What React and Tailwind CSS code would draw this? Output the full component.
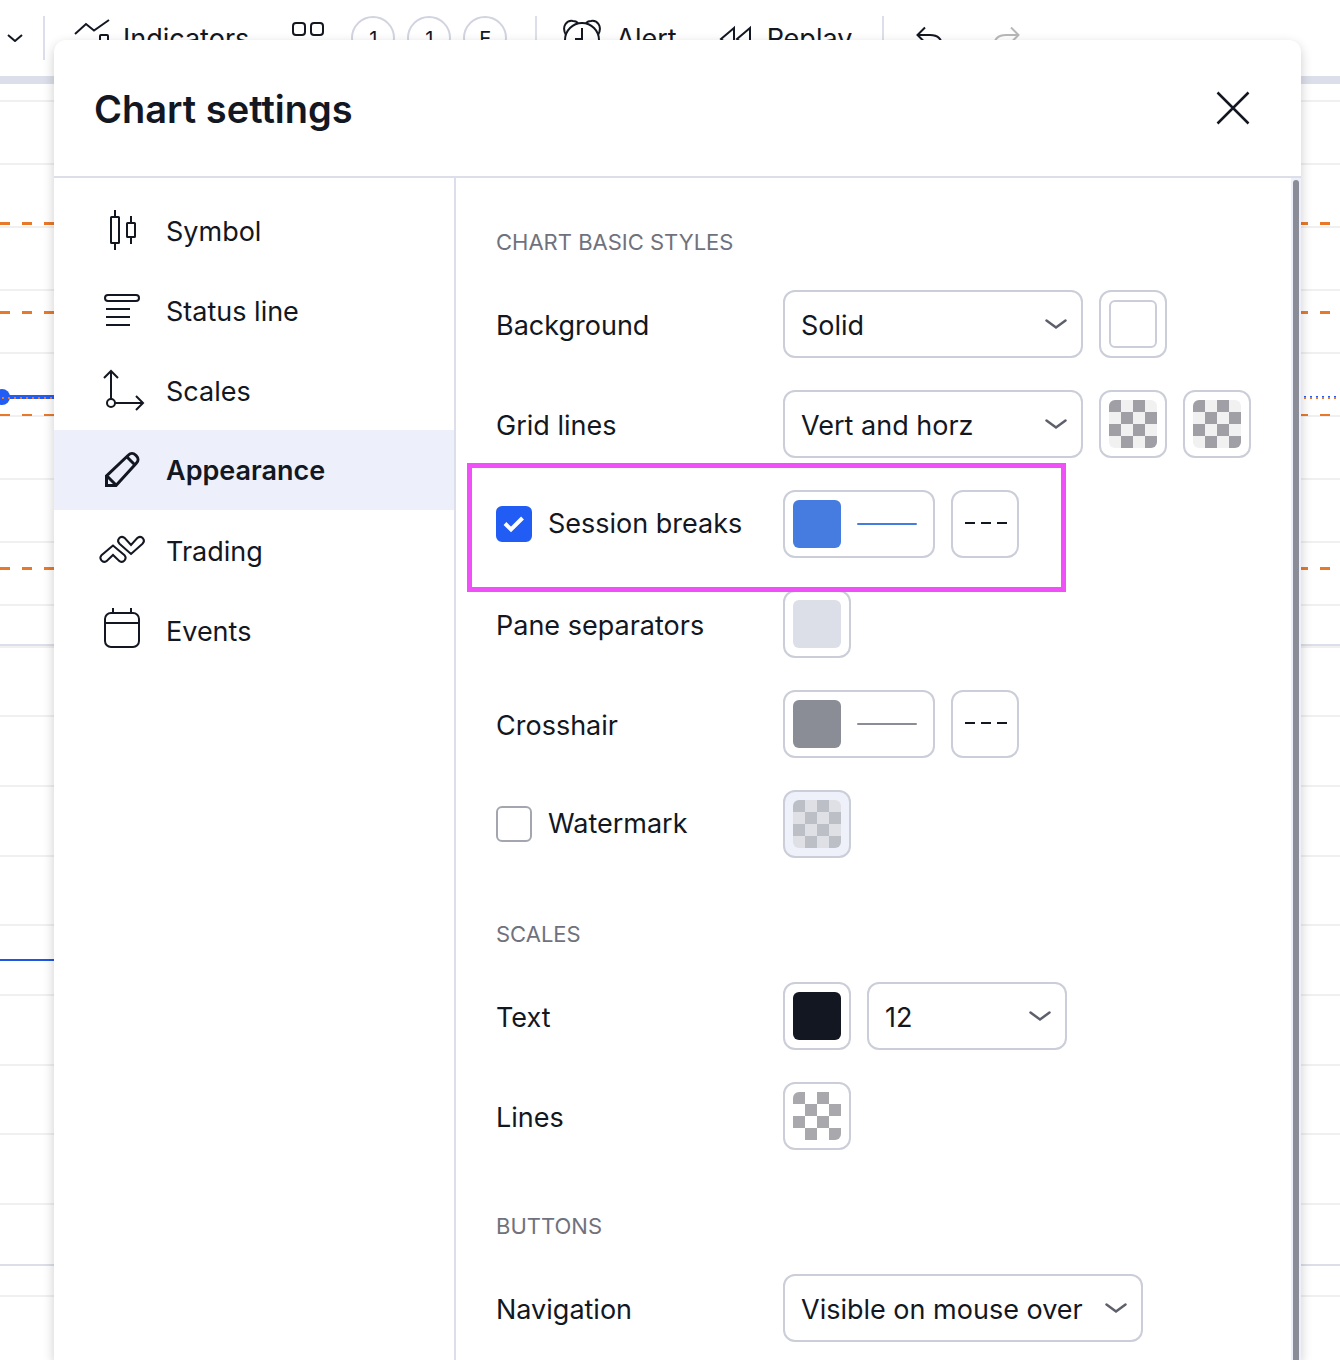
import React, { useState } from "react";

const GRID_LINES = [101, 164, 227, 290, 353, 416, 479, 542, 605, 647, 716, 786, 856, 925, 995, 1065, 1134, 1204, 1296];
const LEVELS = [
  { y: 223.5, width: 3 },
  { y: 312.5, width: 3 },
  { y: 415, width: 2 },
  { y: 568.5, width: 3 },
];

function Toolbar() {
  return (
    <header className="flex h-[84px] items-center overflow-hidden whitespace-nowrap border-b-8 border-[#dcdfe9] pl-[7px] text-[27px]">
      <button aria-label="More" className="w-4 shrink-0">
        <svg viewBox="0 0 16 8" className="w-4 h-2" fill="none" stroke="currentColor" strokeWidth="2"><path d="M1 1l7 6 7-6" /></svg>
      </button>
      <span className="ml-5 h-11 w-0.5 shrink-0 bg-[#dcdfe9]" />
      <button className="ml-7 flex shrink-0 items-center gap-2">
        <svg viewBox="0 0 42 44" className="h-11 w-[42px]" fill="none" stroke="currentColor" strokeWidth="2">
          <path d="M2 18L13 8l8 6.500L36 4" />
          <rect x="27" y="19" width="8" height="20" rx="1" />
        </svg>
        <span className="pt-0.5">Indicators</span>
      </button>
      <button aria-label="Layouts" className="ml-[42px] shrink-0">
        <svg viewBox="0 0 34 34" className="size-[34px]" fill="none" stroke="currentColor" strokeWidth="2">
          <rect x="2" y="2" width="12" height="12" rx="3" /><rect x="20" y="2" width="12" height="12" rx="3" />
          <rect x="2" y="20" width="12" height="12" rx="3" /><rect x="20" y="20" width="12" height="12" rx="3" />
        </svg>
      </button>
      <div className="ml-[26px] flex shrink-0 gap-3 text-xl">
        {["1", "1", "E"].map((t, i) => (
          <button key={i} className="size-11 rounded-full border-2 border-[#d1d4e0] pt-0.5">{t}</button>
        ))}
      </div>
      <span className="ml-7 h-11 w-0.5 shrink-0 bg-[#dcdfe9]" />
      <button className="ml-[25px] flex shrink-0 items-center gap-3.5">
        <svg viewBox="0 0 40 44" className="h-11 w-10" fill="none" stroke="currentColor" strokeWidth="2">
          <path d="M4 19C-1 10 5 4 11 5q3 0 5 2M36 19c5-9-1-15-7-14q-3 0-5 2" />
          <circle cx="20" cy="24" r="17" />
          <path d="M20 12v11h-7" />
        </svg>
        <span className="pt-0.5">Alert</span>
      </button>
      <button className="ml-[42px] flex shrink-0 items-center gap-4">
        <svg viewBox="0 0 32 44" className="h-11 w-8" fill="none" stroke="currentColor" strokeWidth="2">
          <path d="M15 12L2 23l13 11zM31 12L18 23l13 11z" />
        </svg>
        <span className="pt-0.5">Replay</span>
      </button>
      <span className="ml-[30px] h-11 w-0.5 shrink-0 bg-[#dcdfe9]" />
      <button aria-label="Undo" className="ml-8 shrink-0">
        <svg viewBox="0 0 28 44" className="h-11 w-7" fill="none" stroke="currentColor" strokeWidth="2"><path d="M9 11.500L1.500 19 9 26.500M2 19h12q12 0 12 12" /></svg>
      </button>
      <button aria-label="Redo" className="ml-12 shrink-0 text-[#b8b8b8]">
        <svg viewBox="0 0 28 44" className="h-11 w-7" fill="none" stroke="currentColor" strokeWidth="2"><path d="M19 11.500l7.500 7.500-7.500 7.500M26 19H14Q2 19 2 31" /></svg>
      </button>
    </header>
  );
}

function ChartBackdrop() {
  return (
    <svg aria-hidden="true" className="absolute inset-0 h-full w-full">
      {GRID_LINES.map((y) => <line key={y} x1="0" x2="100%" y1={y} y2={y} stroke="#f0f0f1" strokeWidth="2" />)}
      <line x1="0" x2="100%" y1="645" y2="645" stroke="#dcdfe9" strokeWidth="2" />
      <line x1="0" x2="100%" y1="1265" y2="1265" stroke="#dcdfe9" strokeWidth="2" />
      {LEVELS.map(({ y, width }) => <line key={y} x1="0" x2="100%" y1={y} y2={y} stroke="#e8792b" strokeWidth={width} strokeDasharray="10 12" />)}
      <line x1="0" x2="100%" y1="397" y2="397" stroke="#215df5" strokeWidth="2" strokeDasharray="2 4" strokeDashoffset="-2" />
      <line x1="0" x2="50%" y1="397" y2="397" stroke="#215df5" strokeWidth="4" />
      <circle cx="2" cy="397" r="8" fill="#215df5" />
      <line x1="0" x2="100%" y1="398" y2="398" stroke="#e8792b" strokeWidth="2" strokeDasharray="2 4" strokeDashoffset="-2" />
      <line x1="0" x2="50%" y1="960" y2="960" stroke="#1e58e0" strokeWidth="2" />
    </svg>
  );
}

const NAV = [
  ["Symbol", <><rect x="17" y="15" width="8" height="26" rx="0.500" /><rect x="33" y="21" width="8" height="14" rx="0.500" /><path d="M21 8v6M21 42v6M37 14v6M37 36v6" /></>],
  ["Status line", <><rect x="11" y="13" width="34" height="6" rx="3" /><path d="M12 27h24M12 35h24M12 43h24" /></>],
  ["Scales", <><circle cx="17" cy="41" r="4" /><path d="M17 37V9M10 16l7-7 7 7M21 41h28M42 34l7 7-7 7" /></>],
  ["Appearance", <g strokeWidth="3"><path d="M12.500 43.500V34L34.500 13c2-2 5-2 7 0l1 1c2 2 2 5 0 7L22 43.500zM13 34l9 9M33 15l8.500 8.500" /></g>],
  ["Trading", <><path d="M19 23.500L7.500 33.200c-3 3.500 1 8.300 5 6L19 33l6.500 6.200c4 2.300 8-2.500 5-6zM37 32l11.500-10.200c3.500-3.500-.5-8.800-5-6L37 23l-6.500-7.200c-4.500-2.800-8.500 2.500-5 6z" /></>],
  ["Events", <><rect x="11" y="11" width="34" height="34" rx="6" /><path d="M11 21h34M19 6v5M37 6v5" /></>],
];

function Sidebar() {
  return (
    <nav className="w-[402px] shrink-0 border-r-2 border-[#dcdfe9] pt-3">
      {NAV.map(([name, icon]) => (
        <button
          key={name}
          className={
            name === "Appearance"
              ? "flex h-20 w-full items-center gap-4 bg-[#edf0fa] pl-10 text-left font-semibold"
              : "flex h-20 w-full items-center gap-4 pl-10 text-left"
          }
        >
          <svg viewBox="0 0 56 56" className="size-14" fill="none" stroke="currentColor" strokeWidth="2">{icon}</svg>
          <span className={name === "Appearance" ? "pt-0.5" : "pt-1"}>{name}</span>
        </button>
      ))}
    </nav>
  );
}

function Select({ id, options, width }) {
  return (
    <div className={`relative ${width}`}>
      <select id={id} className="h-[68px] w-full appearance-none rounded-xl border-2 border-[#cbcdd8] bg-white pl-4 pr-12 pt-1">
        {options.map((o) => <option key={o}>{o}</option>)}
      </select>
      <svg viewBox="0 0 22 12" className="pointer-events-none absolute right-4 top-7 h-3 w-[22px] text-[#5d606b]" fill="none" stroke="currentColor" strokeWidth="2.500" strokeLinecap="round"><path d="M1.500 2.500l9.500 7 9.500-7" /></svg>
    </div>
  );
}

function Swatch({ label, fill, frame = "bg-white" }) {
  return (
    <button aria-label={label} className={`size-[68px] rounded-xl border-2 border-[#cbcdd8] p-2 ${frame}`}>
      <span className={`block size-12 rounded-md ${fill}`} />
    </button>
  );
}

function LineSwatch({ label, fill }) {
  return (
    <button aria-label={label} className="flex h-[68px] w-[152px] items-center gap-4 rounded-xl border-2 border-[#cbcdd8] p-2 pr-4">
      <span className={`size-12 shrink-0 rounded-md ${fill}`} />
      <span className={`h-0.5 grow rounded-full ${fill}`} />
    </button>
  );
}

function DashButton({ label }) {
  return (
    <button aria-label={label} className="flex size-[68px] items-center justify-center rounded-xl border-2 border-[#cbcdd8]">
      <svg viewBox="0 0 44 4" className="h-1 w-11" stroke="currentColor" strokeWidth="2"><path d="M2 1h42" strokeDasharray="10 6" /></svg>
    </button>
  );
}

function Row({ label, htmlFor, children }) {
  return (
    <div className="flex items-center">
      <label htmlFor={htmlFor} className="w-[287px] shrink-0 pt-1">{label}</label>
      <div className="flex gap-4">{children}</div>
    </div>
  );
}

function CheckRow({ label, defaultChecked, children, highlight }) {
  const [on, setOn] = useState(defaultChecked);
  return (
    <div className="relative flex items-center">
      <label className="flex w-[287px] shrink-0 items-center gap-4">
        <span className="relative size-9">
          <input
            type="checkbox"
            checked={on}
            onChange={(e) => setOn(e.target.checked)}
            className="block size-9 appearance-none rounded-md border-2 border-[#a3a6af] bg-white checked:border-[#215df5] checked:bg-[#215df5]"
          />
          {on && <svg viewBox="0 0 36 36" className="pointer-events-none absolute inset-0" fill="none" stroke="white" strokeWidth="4"><path d="M9 17.500l6 6L26.500 12" /></svg>}
        </span>
        {label}
      </label>
      <div className="flex gap-4">{children}</div>
      {highlight && <div className="pointer-events-none absolute -bottom-[34px] -left-[29px] -top-[27px] z-10 w-[599px] border-[5px] border-[#f050f8]" />}
    </div>
  );
}

function Section({ title, children }) {
  return (
    <section>
      <h3 className="mb-8 text-[22px] leading-8 text-[#6f727d]">{title}</h3>
      <div className="flex flex-col gap-8">{children}</div>
    </section>
  );
}

const GRID_CHECKER = "bg-[repeating-conic-gradient(#f1f1f1_0_25%,#9f9fa5_0_50%)] bg-[length:24px_24px]";

export default function App() {
  return (
    <main className="relative h-screen overflow-hidden bg-white font-['Inter',sans-serif] text-[#131722]">
      <ChartBackdrop />
      <Toolbar />
      <div role="dialog" aria-labelledby="dialog-title" className="absolute bottom-0 left-[54px] right-[39px] top-10 flex flex-col rounded-t-xl bg-white text-[27px] leading-9 shadow-[0_4px_12px_rgba(0,0,0,0.2)]">
        <div className="flex h-[138px] shrink-0 items-center justify-between border-b-2 border-[#dcdfe9] px-10">
          <h2 id="dialog-title" className="pt-0.5 text-[38px] font-semibold leading-12">Chart settings</h2>
          <button aria-label="Close" className="flex size-14 items-center justify-center">
            <svg viewBox="0 0 34 34" className="size-[34px]" fill="none" stroke="currentColor" strokeWidth="2.500"><path d="M1.500 1.500l31 31M32.500 1.500l-31 31" /></svg>
          </button>
        </div>
        <div className="flex min-h-0 grow">
          <Sidebar />
          <div className="flex min-w-0 grow flex-col gap-[60px] overflow-hidden pl-10 pt-12">
            <Section title="CHART BASIC STYLES">
              <Row label="Background" htmlFor="background">
                <Select id="background" width="w-[300px]" options={["Solid", "Gradient"]} />
                <Swatch label="Background color" fill="border-2 border-[#cbcdd8] bg-white" />
              </Row>
              <Row label="Grid lines" htmlFor="grid-lines">
                <Select id="grid-lines" width="w-[300px]" options={["Vert and horz", "Vert only", "Horz only", "None"]} />
                <Swatch label="Vertical grid color" fill={GRID_CHECKER} />
                <Swatch label="Horizontal grid color" fill={GRID_CHECKER} />
              </Row>
              <CheckRow label="Session breaks" defaultChecked={true} highlight>
                <LineSwatch label="Session breaks color" fill="bg-[#467bdf]" />
                <DashButton label="Session breaks line style" />
              </CheckRow>
              <Row label="Pane separators">
                <Swatch label="Pane separators color" fill="bg-[#dcdfe8]" />
              </Row>
              <Row label="Crosshair">
                <LineSwatch label="Crosshair color" fill="bg-[#8a8d96]" />
                <DashButton label="Crosshair line style" />
              </Row>
              <CheckRow label="Watermark" defaultChecked={false}>
                <Swatch label="Watermark color" frame="bg-[#eef1fa]" fill="bg-[repeating-conic-gradient(#dfe0e5_0_25%,#bdbfc6_0_50%)] bg-[length:24px_24px]" />
              </CheckRow>
            </Section>
            <Section title="SCALES">
              <Row label="Text" htmlFor="text-size">
                <Swatch label="Text color" fill="bg-[#131722]" />
                <Select id="text-size" width="w-[200px]" options={["12", "14", "16"]} />
              </Row>
              <Row label="Lines">
                <Swatch label="Lines color" fill="bg-[repeating-conic-gradient(#ffffff_0_25%,#a8a8ad_0_50%)] bg-[length:24px_24px]" />
              </Row>
            </Section>
            <Section title="BUTTONS">
              <Row label="Navigation" htmlFor="navigation">
                <Select id="navigation" width="w-[360px]" options={["Visible on mouse over", "Always visible", "Always invisible"]} />
              </Row>
            </Section>
          </div>
          <div className="w-2.5 shrink-0 bg-[#edf0fa] px-0.5 pt-0.5">
            <div className="h-full rounded-t-full bg-[#8a8d96]" />
          </div>
        </div>
      </div>
    </main>
  );
}
